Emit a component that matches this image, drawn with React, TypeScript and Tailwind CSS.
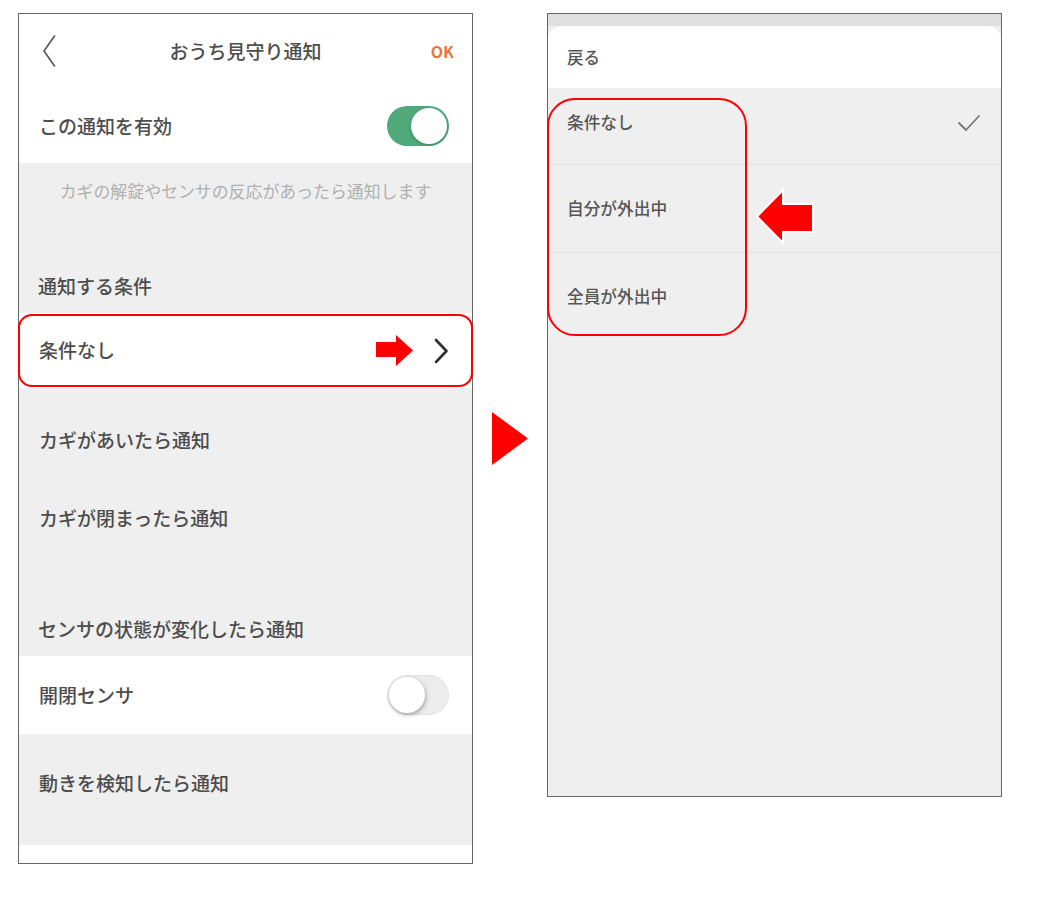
import React from "react";

const ink = "text-[#4d4d4d]";

const Toggle = ({ on }: { on: boolean }) =>
  on ? (
    <div className="w-[62px] h-[40px] rounded-full bg-[#4fa97b] p-[2px] flex justify-end">
      <div className="w-[36px] h-[36px] rounded-full bg-white shadow-[0_1px_3px_rgba(0,0,0,0.25)]" />
    </div>
  ) : (
    <div className="w-[62px] h-[40px] rounded-full bg-[#ececec] border border-[#e2e2e2] p-px flex justify-start">
      <div className="w-[36px] h-[36px] rounded-full bg-white shadow-[1px_2px_4px_rgba(0,0,0,0.3)]" />
    </div>
  );

const GrayRow = ({ label }: { label: string }) => (
  <div className={`h-[78px] flex items-center pl-[20px] text-[19px] font-medium ${ink}`}>{label}</div>
);

const SectionLabel = ({ label, h }: { label: string; h: string }) => (
  <div className={`${h} flex items-end pb-[14px] pl-[19px] text-[19px] leading-[27px] font-medium ${ink}`}>
    {label}
  </div>
);

const SettingsPanel = () => (
  <div className="w-[455px] border border-[#666] bg-white">
    {/* header */}
    <div className="h-[74px] grid grid-cols-[1fr_auto_1fr] items-center">
      <div className="pl-[23px]">
        <svg width="14" height="32" viewBox="0 0 14 32" fill="none">
          <path d="M12.5 1 L2 16 L12.5 31" stroke="#555" strokeWidth="1.6" strokeLinecap="round" strokeLinejoin="round" />
        </svg>
      </div>
      <div className={`text-[19px] font-medium ${ink}`}>おうち見守り通知</div>
      <div className="flex justify-end pr-[18px] text-[16px] font-bold text-[#e8763b]">OK</div>
    </div>

    <div className="h-[75px] flex items-center justify-between pl-[20px] pr-[23px] pt-px">
      <span className={`text-[19px] font-medium ${ink}`}>この通知を有効</span>
      <Toggle on />
    </div>

    <div className="bg-[#efefef]">
      <div className="h-[55px] flex items-center justify-center text-[16.9px] text-[#b0b0b0]">
        カギの解錠やセンサの反応があったら通知します
      </div>
      <SectionLabel label="通知する条件" h="h-[95px]" />

      <div className="relative h-[75px] bg-white flex items-center justify-between pl-[20px] pr-[23px]">
        <span className={`text-[19px] font-medium ${ink}`}>条件なし</span>
        <div className="flex items-center gap-[20px]">
          <svg width="37" height="31" viewBox="0 0 37 31">
            <polygon points="0,7 20,7 20,0 37,15.5 20,31 20,22 0,22" fill="#ff0000" />
          </svg>
          <svg width="16" height="26" viewBox="0 0 16 26" fill="none">
            <path d="M3 2 L13.5 13 L3 24" stroke="#2f2f2f" strokeWidth="2.6" strokeLinecap="round" strokeLinejoin="round" />
          </svg>
        </div>
        <div className="absolute -left-px -right-px top-px bottom-px border-2 border-[#ff0000] rounded-[14px]" />
      </div>

      <div className="h-[13px]" />
      <GrayRow label="カギがあいたら通知" />
      <GrayRow label="カギが閉まったら通知" />
      <SectionLabel label="センサの状態が変化したら通知" h="h-[99px]" />

      <div className="h-[78px] bg-white flex items-center justify-between pl-[20px] pr-[23px]">
        <span className={`text-[19px] font-medium ${ink}`}>開閉センサ</span>
        <Toggle on={false} />
      </div>

      <div className="h-[111px] pt-[10px]">
        <GrayRow label="動きを検知したら通知" />
      </div>
    </div>
    <div className="h-[18px] bg-white" />
  </div>
);

const options = [
  { label: "条件なし", h: "h-[76px] pb-[7px]", checked: true },
  { label: "自分が外出中", h: "h-[87px]", checked: false },
  { label: "全員が外出中", h: "h-[87px]", checked: false },
];

const ConditionPanel = () => (
  <div className="relative w-[455px] h-[784px] border border-[#666] bg-[#efefef]">
    <div className="h-[12px] bg-[#dfdfdf]" />
    <div className="h-[62px] bg-white rounded-t-[14px] flex items-center pl-[19px] text-[16.5px] font-medium text-[#555]">
      戻る
    </div>
    {options.map((o, i) => (
      <div key={o.label}>
        {i > 0 && <div className="h-px bg-[#e3e3e3]" />}
        <div className={`${o.h} flex items-center justify-between pl-[19px] pr-[20px]`}>
          <span className="text-[16.7px] font-medium text-[#555]">{o.label}</span>
          {o.checked && (
            <svg width="24" height="18" viewBox="0 0 24 18" fill="none">
              <path d="M2 9 L9 16 L22 2" stroke="#777" strokeWidth="1.8" strokeLinecap="round" strokeLinejoin="round" />
            </svg>
          )}
        </div>
      </div>
    ))}

    {/* annotations */}
    <div className="absolute left-[-1px] top-[84px] w-[200px] h-[238px] border-2 border-[#ff0000] rounded-[28px]" />
    <svg className="absolute left-[207px] top-[174px]" width="60" height="57" viewBox="0 0 60 57">
      <polygon
        points="2,28.5 28,2 28,16 58,16 58,44 28,44 28,55"
        fill="#ff0000"
        stroke="#ffffff"
        strokeWidth="2"
        strokeLinejoin="miter"
      />
    </svg>
  </div>
);

export default function App() {
  return (
    <div className="min-h-[906px] bg-white font-['Noto_Sans_CJK_JP','Noto_Sans',sans-serif]">
      <div className="flex items-start pl-[18px] pt-[13px]">
        <SettingsPanel />
        <div className="mt-[399px] ml-[19px] mr-[19px]">
          <svg width="36" height="53" viewBox="0 0 36 53">
            <polygon points="0,0 36,26.5 0,53" fill="#ff0000" />
          </svg>
        </div>
        <ConditionPanel />
      </div>
    </div>
  );
}
